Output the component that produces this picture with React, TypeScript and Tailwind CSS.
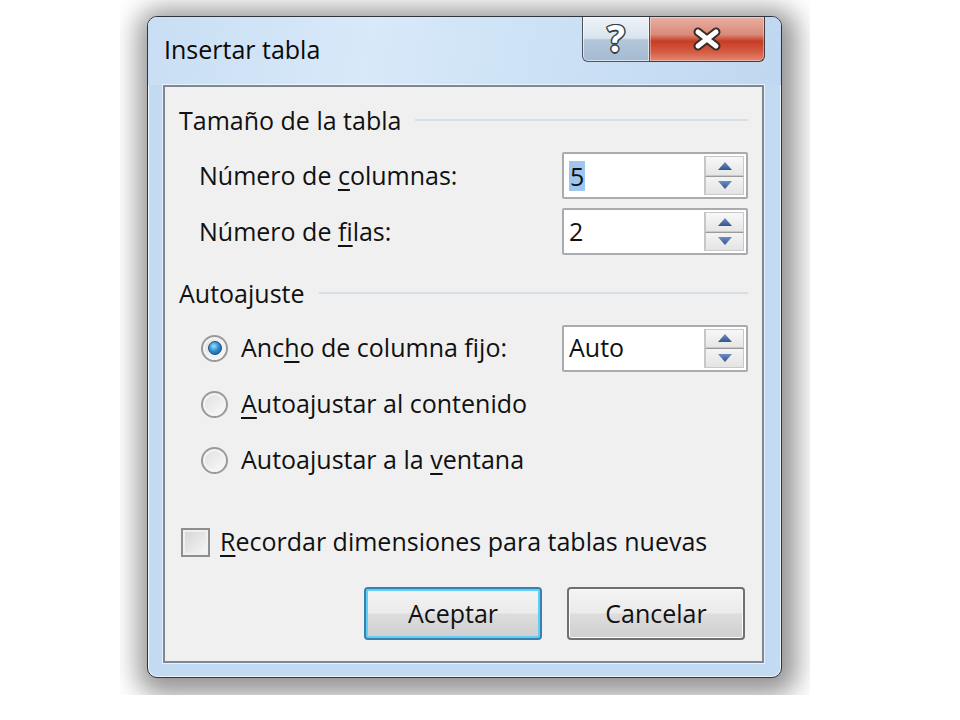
import React from "react";

const font = { fontFamily: '"Open Sans", "Noto Sans", sans-serif' };

function Arrow({ up }: { up?: boolean }) {
  return (
    <svg width="14" height="8" viewBox="0 0 14 8">
      <defs>
        <linearGradient id={up ? "ua" : "da"} x1="0" y1="0" x2="0" y2="1">
          <stop offset="0" stopColor="#6d8fc4" />
          <stop offset="1" stopColor="#34548c" />
        </linearGradient>
      </defs>
      {up ? (
        <polygon points="7,0 14,8 0,8" fill="url(#ua)" />
      ) : (
        <polygon points="0,0 14,0 7,8" fill="url(#da)" />
      )}
    </svg>
  );
}

function SpinBox({ value, selected }: { value: string; selected?: boolean }) {
  return (
    <div className="w-[186px] h-[47px] flex items-stretch bg-white border-2 border-[#a9abb0] rounded-[2px]">
      <div className="flex-1 flex items-center pl-[5px] text-[25px] text-[#111]">
        <span className={selected ? "bg-[#9ec6ee] px-[1px] leading-[30px]" : ""}>{value}</span>
      </div>
      <div className="w-[40px] flex flex-col my-[2px] mr-[2px] border-l border-[#c6c6c6]">
        <div className="flex-1 flex items-center justify-center border border-[#c9c9c9] bg-gradient-to-b from-[#f8f8f8] to-[#e6e6e6]">
          <Arrow up />
        </div>
        <div className="flex-1 flex items-center justify-center border border-[#c9c9c9] border-t-[#9a9a9a] bg-gradient-to-b from-[#f4f4f4] to-[#e4e4e4]">
          <Arrow />
        </div>
      </div>
    </div>
  );
}

function Radio({ checked }: { checked?: boolean }) {
  return (
    <div className="w-[27px] h-[27px] rounded-full border-2 border-[#9a9a9a] bg-gradient-to-br from-[#dedede] to-[#fbfbfb] flex items-center justify-center shadow-[inset_0_0_0_2px_#f4f4f4]">
      {checked && (
        <div className="w-[14px] h-[14px] rounded-full bg-[radial-gradient(circle_at_40%_35%,#9fe0ff_0%,#2f8fd0_45%,#0f4f88_100%)] border border-[#1d4f7c]" />
      )}
    </div>
  );
}

function GroupHeader({ text }: { text: string }) {
  return (
    <div className="h-[28px] flex items-center">
      <span className="text-[25px] text-[#111] leading-none">{text}</span>
      <div className="flex-1 ml-[14px] h-[2px] bg-[#d7dfe6]" />
    </div>
  );
}

const outline =
  "[text-shadow:1.5px_0_0_#36404c,-1.5px_0_0_#36404c,0_1.5px_0_#36404c,0_-1.5px_0_#36404c,1px_1px_0_#36404c,-1px_-1px_0_#36404c,1px_-1px_0_#36404c,-1px_1px_0_#36404c]";

export default function App() {
  return (
    <div className="w-[960px] h-[720px] bg-white overflow-hidden" style={font}>
      <div className="ml-[120px] w-[690px] h-[695px] overflow-hidden bg-white pl-[27px] pt-[16px]">
        <div className="w-[635px] h-[662px] rounded-[10px] border border-[#2f353c] bg-[#c2daf2] flex flex-col relative shadow-[inset_0_0_0_1px_rgba(255,255,255,0.75),3px_5px_26px_12px_rgba(0,0,0,0.42)]">
          {/* title bar */}
          <div className="h-[68px] flex items-start justify-between rounded-t-[9px] bg-[linear-gradient(100deg,#c9def4_0%,#d8e9f9_35%,#cde2f6_60%,#bfd7f0_100%)]">
            <div className="pl-[16px] pt-[16px] text-[25px] text-[#0a0a0a] leading-[32px]">Insertar tabla</div>
            <div className="flex mr-[16px]">
              <div className="w-[68px] h-[45px] rounded-bl-[6px] border border-t-0 border-[#4a5460] bg-[linear-gradient(180deg,#eef3f8_0%,#d9e4ee_48%,#b4c7da_52%,#a3bad2_100%)] flex items-center justify-center shadow-[inset_0_0_0_1px_rgba(255,255,255,0.6)]">
                <span className={"text-[37px] font-bold text-white leading-none -mt-[4px] " + outline}>?</span>
              </div>
              <div className="w-[115px] h-[45px] rounded-br-[6px] border border-t-0 border-l-0 border-[#4a3a3a] bg-[linear-gradient(180deg,#e8b0a4_0%,#d98a78_40%,#c63c24_55%,#d65c45_80%,#e08a74_100%)] flex items-center justify-center shadow-[inset_0_0_0_1px_rgba(255,255,255,0.35)]">
                <svg width="32" height="24" viewBox="0 0 32 24">
                  <path d="M7 5 L25 19 M25 5 L7 19" stroke="#3a2a2a" strokeWidth="9" strokeLinecap="round" />
                  <path d="M7 5 L25 19 M25 5 L7 19" stroke="#ffffff" strokeWidth="5" strokeLinecap="round" />
                </svg>
              </div>
            </div>
          </div>

          {/* panel */}
          <div className="flex-1 ml-[15px] mr-[17px] mb-[14px] border-2 border-[#7d8894] bg-[#f0f0f0] px-[14px] flex flex-col text-[#111] shadow-[0_0_0_1px_rgba(255,255,255,0.6)]">
            <div className="mt-[19px]">
              <GroupHeader text="Tamaño de la tabla" />
            </div>
            <div className="mt-[18px] h-[47px] flex items-center justify-between">
              <span className="pl-[20px] text-[25px]">
                Número de <span className="underline underline-offset-[4px]">c</span>olumnas:
              </span>
              <SpinBox value="5" selected />
            </div>
            <div className="mt-[9px] h-[47px] flex items-center justify-between">
              <span className="pl-[20px] text-[25px]">
                Número de <span className="underline underline-offset-[4px]">f</span>ilas:
              </span>
              <SpinBox value="2" />
            </div>
            <div className="mt-[24px]">
              <GroupHeader text="Autoajuste" />
            </div>
            <div className="mt-[18px] h-[46px] flex items-center justify-between">
              <div className="pl-[22px] flex items-center gap-[13px]">
                <Radio checked />
                <span className="text-[25px]">
                  Anc<span className="underline underline-offset-[4px]">h</span>o de columna fijo:
                </span>
              </div>
              <SpinBox value="Auto" />
            </div>
            <div className="mt-[10px] h-[46px] flex items-center pl-[22px] gap-[13px]">
              <Radio />
              <span className="text-[25px]">
                <span className="underline underline-offset-[4px]">A</span>utoajustar al contenido
              </span>
            </div>
            <div className="mt-[10px] h-[46px] flex items-center pl-[22px] gap-[13px]">
              <Radio />
              <span className="text-[25px]">
                Autoajustar a la <span className="underline underline-offset-[4px]">v</span>entana
              </span>
            </div>
            <div className="mt-[36px] h-[46px] flex items-center pl-[2px] gap-[10px]">
              <div className="w-[29px] h-[29px] border-2 border-[#8e8e8e] bg-gradient-to-br from-[#d4d4d4] to-[#f7f7f7] shadow-[inset_0_0_0_2px_#f0f0f0]" />
              <span className="text-[25px]">
                <span className="underline underline-offset-[4px]">R</span>ecordar dimensiones para tablas nuevas
              </span>
            </div>
            <div className="mt-[22px] h-[53px] flex justify-end gap-[25px] pr-[3px]">
              <button className="w-[178px] h-[53px] rounded-[4px] border-2 border-[#3a7fb0] shadow-[inset_0_0_0_2px_#5fd0f5] bg-[linear-gradient(180deg,#f4f4f4_0%,#ebebeb_48%,#dddddd_52%,#cfcfcf_100%)] text-[25px] text-[#111]">
                Aceptar
              </button>
              <button className="w-[178px] h-[53px] rounded-[4px] border-2 border-[#707070] shadow-[inset_0_0_0_1px_#fafafa] bg-[linear-gradient(180deg,#f4f4f4_0%,#ebebeb_48%,#dddddd_52%,#cfcfcf_100%)] text-[25px] text-[#111]">
                Cancelar
              </button>
            </div>
          </div>
        </div>
      </div>
    </div>
  );
}
